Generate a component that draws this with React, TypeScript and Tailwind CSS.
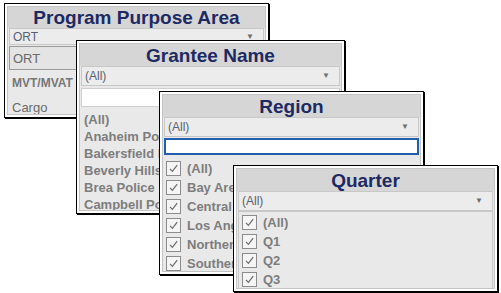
import React from "react";

type PanelProps = {
    className: string;
    title: string;
    value: string;
    titleH?: string;
    boxH?: string;
    children?: React.ReactNode;
};

function Panel({ className, title, value, titleH = "h-[22px]", boxH = "h-[20px]", children }: PanelProps) {
    return (
        <div
            className={`absolute overflow-hidden border border-black bg-white p-[2px] shadow-[1px_1px_0_#000] ${className}`}
        >
            <div className="flex h-full flex-col overflow-hidden border border-[#c4c4c4] bg-[#e9e9e9]">
                <div
                    className={`flex shrink-0 items-center justify-center bg-[#d6d6d6] text-[19px] font-bold leading-none text-[#1d2a62] ${titleH}`}
                >
                    {title}
                </div>
                <div
                    className={`mx-[1px] flex shrink-0 items-center justify-between border border-[#c8c8c8] bg-[#ececec] px-[3px] text-[12px] text-[#5b5f72] ${boxH}`}
                >
                    <span>{value}</span>
                    <span className="pr-[6px] text-[8px] text-[#6e6e6e]">▼</span>
                </div>
                {children}
            </div>
        </div>
    );
}

function Check() {
    return (
        <span className="mr-[6px] flex h-[15px] w-[15px] shrink-0 items-center justify-center border border-[#8c8c8c] bg-[#f5f5f5]">
            <svg width="11" height="11" viewBox="0 0 11 11">
                <path d="M2 5.8 L4.4 8.4 L9.2 2.2" fill="none" stroke="#6b6b6b" strokeWidth="1.2" />
            </svg>
        </span>
    );
}

const grantees = ["(All)", "Anaheim Police Department", "Bakersfield Police Department", "Beverly Hills Police Department", "Brea Police Department", "Campbell Police Department"];
const regions = ["(All)", "Bay Area", "Central", "Los Angeles", "Northern", "Southern"];
const quarters = ["(All)", "Q1", "Q2", "Q3"];

export default function App() {
    return (
        <div className="relative h-[293px] w-[501px] overflow-hidden bg-white font-['Liberation_Sans',Arial,sans-serif]">
            <Panel
                className="left-[4px] top-[3px] h-[115px] w-[265px]"
                title="Program Purpose Area"
                value="ORT"
                titleH="h-[21px]"
                boxH="h-[17px]"
            >
                <div className="flex flex-col text-[13px] text-[#6a6a6a]">
                    <div className="mx-[1px] mt-[1px] flex h-[24px] shrink-0 items-start border border-[#9a9a9a] bg-[#e4e4e4] px-[3px] pt-[2px]">
                        ORT
                    </div>
                    <div className="flex h-[25px] shrink-0 items-center px-[4px] text-[12px] font-bold text-[#777]">
                        MVT/MVAT
                    </div>
                    <div className="flex h-[25px] shrink-0 items-center px-[4px]">Cargo</div>
                </div>
            </Panel>

            <Panel className="left-[76px] top-[40px] h-[174px] w-[269px]" title="Grantee Name" value="(All)">
                <div className="mx-[1px] mt-[2px] h-[19px] shrink-0 border border-[#cfcfcf] bg-white" />
                <div className="flex flex-col pt-[4px] text-[13px] font-bold text-[#7d7d7d]">
                    {grantees.map((g) => (
                        <div key={g} className="flex h-[17px] items-center whitespace-nowrap px-[4px]">
                            {g}
                        </div>
                    ))}
                </div>
            </Panel>

            <Panel className="left-[159px] top-[91px] h-[184px] w-[265px]" title="Region" value="(All)">
                <div className="mx-[1px] mt-[1px] h-[17px] shrink-0 border-2 border-[#1f5fae] bg-white" />
                <div className="flex flex-col pt-[4px] text-[13px] font-bold text-[#7d7d7d]">
                    {regions.map((r) => (
                        <div key={r} className="flex h-[19px] items-center whitespace-nowrap px-[3px]">
                            <Check />
                            {r}
                        </div>
                    ))}
                </div>
            </Panel>

            <Panel className="left-[233px] top-[165px] h-[127px] w-[265px]" title="Quarter" value="(All)">
                <div className="mx-[1px] mb-[2px] flex flex-1 flex-col border border-[#c8c8c8] pt-[1px] text-[13px] font-bold text-[#7d7d7d]">
                    {quarters.map((q) => (
                        <div key={q} className="flex h-[19px] items-center px-[3px]">
                            <Check />
                            {q}
                        </div>
                    ))}
                </div>
            </Panel>
        </div>
    );
}
